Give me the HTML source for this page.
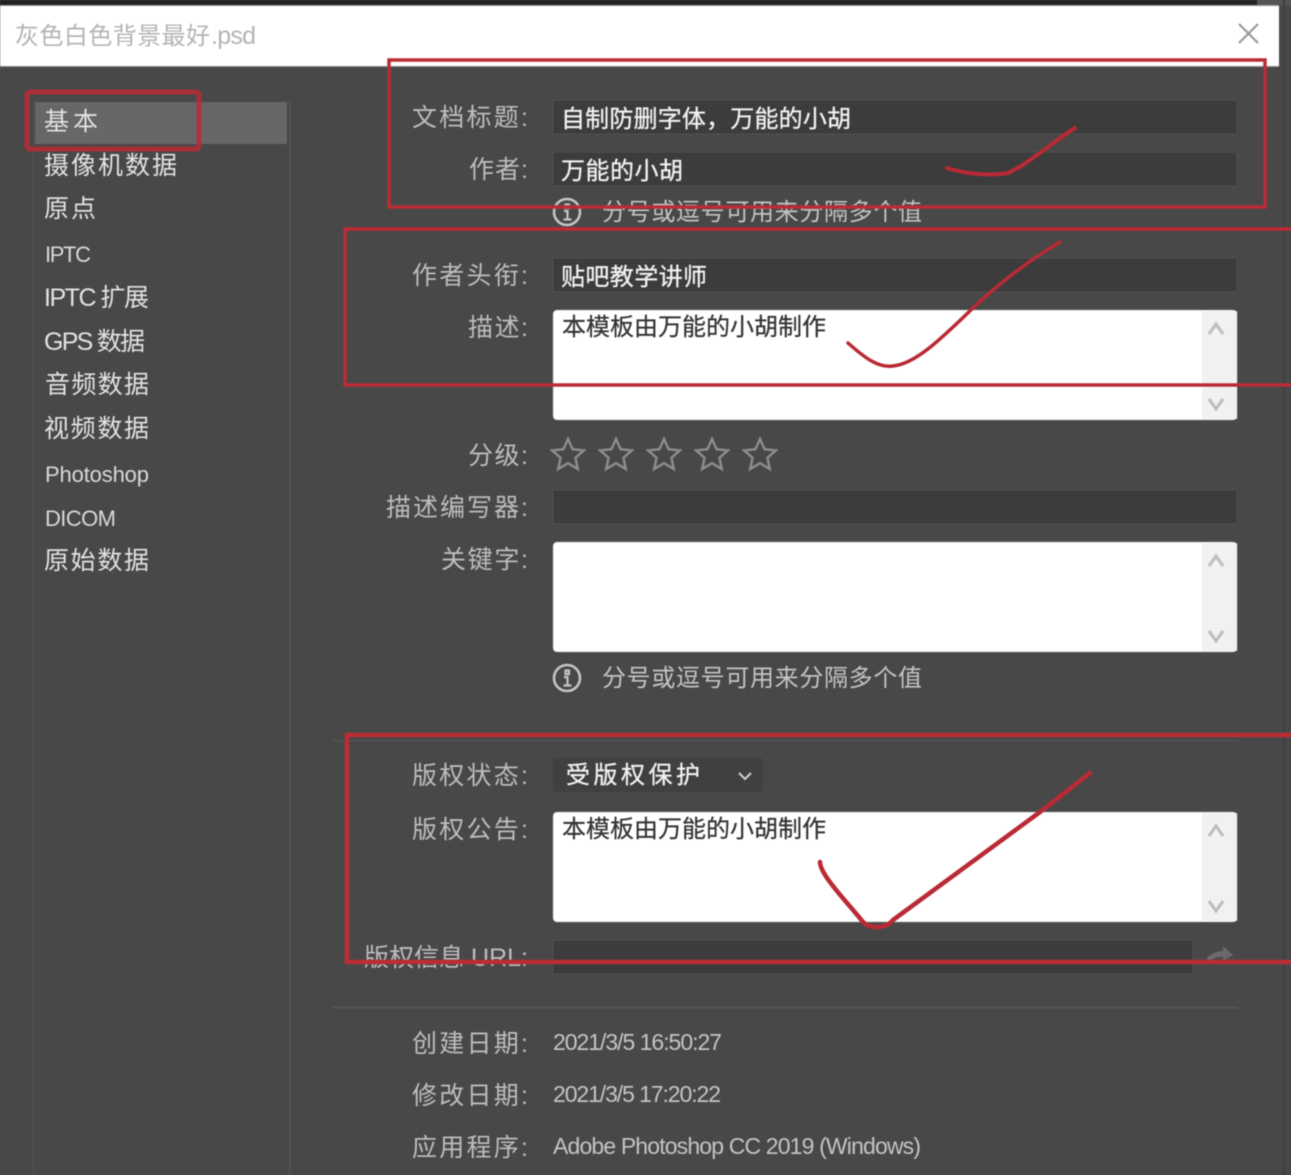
<!DOCTYPE html>
<html>
<head>
<meta charset="utf-8">
<style>
html,body{margin:0;padding:0;background:#484848;width:1291px;height:1175px;overflow:hidden}
svg{display:block;position:absolute;left:0;top:0;filter:blur(.45px)}
text{font-family:"Liberation Sans","Noto Sans CJK SC",sans-serif}
.l{fill:#bdbdbd;font-size:25px}
.s{fill:#e2e2e2;font-size:25px}
.se{fill:#d8d8d8;font-size:22px}
.v{fill:#f2f2f2;font-size:24px;stroke:#f2f2f2;stroke-width:.3px}
.b{fill:#333;font-size:24px;stroke:#333;stroke-width:.25px}
.h{fill:#c4c4c4;font-size:24px}
.m{fill:#c4c4c4;font-size:23px}
.f{fill:#3c3c3c;stroke:#505050;stroke-width:1}
.w{fill:#fff;stroke:#999;stroke-width:.6}
.sb{fill:#f1f1f1}
.ar{fill:none;stroke:#bdbdbd;stroke-width:3}
.st{fill:none;stroke:#8d8d8d;stroke-width:2.4}
.r{fill:none;stroke:#bb2c35}
.c{fill:none;stroke:#b92a35;stroke-linecap:round;stroke-linejoin:round}
</style>
</head>
<body>
<svg width="1291" height="1175" viewBox="0 0 1291 1175" xmlns="http://www.w3.org/2000/svg">
<defs>
<path id="star" d="M0-15 4.6-4.8 15.8-3.6 7.4 3.8 9.8 15 0 9.2-9.8 15-7.4 3.8-15.8-3.6-4.6-4.8Z"/>
</defs>
<rect width="1291" height="1175" fill="#484848"/>
<rect width="1291" height="5" fill="#232323"/>
<rect x="1257" width="34" height="5" fill="#555"/>
<rect x="0" y="5" width="1279" height="1" fill="#9a9a9a"/>
<rect x="0" y="6" width="1279" height="60" fill="#fff"/>
<rect x="0" y="66" width="1279" height="1" fill="#8c8c8c"/>
<rect x="1283" y="0" width="2" height="1175" fill="#3f3f3f"/>
<text x="15" y="44" font-size="24" fill="#b4b4b4" textLength="195" lengthAdjust="spacing">灰色白色背景最好</text>
<text x="211" y="44" font-size="25" fill="#b4b4b4" textLength="45" lengthAdjust="spacing">.psd</text>
<path d="M1239 24 1258 43M1258 24 1239 43" stroke="#9a9a9a" stroke-width="2.2" fill="none"/>

<!-- sidebar -->
<rect x="33" y="101" width="1" height="1074" fill="#555"/>
<rect x="289" y="101" width="1.5" height="1074" fill="#555"/>
<rect x="35" y="102" width="252" height="42" fill="#676767"/>
<g>
<text class="s" x="44" y="130" textLength="54" lengthAdjust="spacing">基本</text>
<text class="s" x="44" y="174" textLength="133" lengthAdjust="spacing">摄像机数据</text>
<text class="s" x="44" y="217" textLength="52" lengthAdjust="spacing">原点</text>
<text class="se" x="45" y="262" textLength="46" lengthAdjust="spacing">IPTC</text>
<text class="s" x="44" y="306" textLength="105" lengthAdjust="spacing">IPTC 扩展</text>
<text class="s" x="44" y="350" textLength="101" lengthAdjust="spacing">GPS 数据</text>
<text class="s" x="45" y="393" textLength="104" lengthAdjust="spacing">音频数据</text>
<text class="s" x="44" y="437" textLength="105" lengthAdjust="spacing">视频数据</text>
<text class="se" x="45" y="482" textLength="104" lengthAdjust="spacing">Photoshop</text>
<text class="se" x="45" y="526" textLength="71" lengthAdjust="spacing">DICOM</text>
<text class="s" x="44" y="569" textLength="105" lengthAdjust="spacing">原始数据</text>
</g>

<!-- labels -->
<g>
<text class="l" x="412" y="126" textLength="116" lengthAdjust="spacing">文档标题:</text>
<text class="l" x="469" y="178" textLength="59" lengthAdjust="spacing">作者:</text>
<text class="l" x="412" y="284" textLength="116" lengthAdjust="spacing">作者头衔:</text>
<text class="l" x="468" y="336" textLength="60" lengthAdjust="spacing">描述:</text>
<text class="l" x="468" y="464" textLength="60" lengthAdjust="spacing">分级:</text>
<text class="l" x="386" y="516" textLength="142" lengthAdjust="spacing">描述编写器:</text>
<text class="l" x="441" y="568" textLength="87" lengthAdjust="spacing">关键字:</text>
<text class="l" x="412" y="784" textLength="116" lengthAdjust="spacing">版权状态:</text>
<text class="l" x="412" y="838" textLength="116" lengthAdjust="spacing">版权公告:</text>
<text class="l" x="364" y="966" textLength="164" lengthAdjust="spacing">版权信息 URL:</text>
<text class="l" x="412" y="1052" textLength="116" lengthAdjust="spacing">创建日期:</text>
<text class="l" x="412" y="1104" textLength="116" lengthAdjust="spacing">修改日期:</text>
<text class="l" x="412" y="1156" textLength="116" lengthAdjust="spacing">应用程序:</text>
</g>

<!-- fields -->
<rect class="f" x="553" y="100" width="684" height="34" rx="2"/>
<rect class="f" x="553" y="152" width="684" height="34" rx="2"/>
<rect class="f" x="553" y="258" width="684" height="34" rx="2"/>
<rect class="f" x="553" y="490" width="684" height="34" rx="2"/>
<rect x="553" y="758" width="210" height="34" rx="3" fill="#404040"/>
<rect class="f" x="553" y="940" width="640" height="34" rx="2"/>

<text class="v" x="561" y="127" textLength="290" lengthAdjust="spacing">自制防删字体，万能的小胡</text>
<text class="v" x="561" y="179" textLength="122" lengthAdjust="spacing">万能的小胡</text>
<text class="v" x="561" y="285" textLength="146" lengthAdjust="spacing">贴吧教学讲师</text>
<text class="v" x="566" y="783" textLength="134" lengthAdjust="spacing">受版权保护</text>
<path d="M739 773 745 779 751 773" fill="none" stroke="#d0d0d0" stroke-width="2"/>

<!-- text areas -->
<g>
<rect class="w" x="553" y="310" width="684" height="110" rx="4"/>
<rect class="sb" x="1202" y="311" width="35" height="108"/>
<path class="ar" d="M1209 334 1216 324 1223 334M1209 399 1216 409 1223 399"/>
<rect class="w" x="553" y="542" width="684" height="110" rx="4"/>
<rect class="sb" x="1202" y="543" width="35" height="108"/>
<path class="ar" d="M1209 566 1216 556 1223 566M1209 631 1216 641 1223 631"/>
<rect class="w" x="553" y="812" width="684" height="110" rx="4"/>
<rect class="sb" x="1202" y="813" width="35" height="108"/>
<path class="ar" d="M1209 836 1216 826 1223 836M1209 901 1216 911 1223 901"/>
</g>
<text class="b" x="562" y="335" textLength="264" lengthAdjust="spacing">本模板由万能的小胡制作</text>
<text class="b" x="562" y="837" textLength="264" lengthAdjust="spacing">本模板由万能的小胡制作</text>

<!-- info hints -->
<g fill="none" stroke="#c4c4c4" stroke-width="2.6">
<circle cx="567" cy="212" r="13"/>
<circle cx="567" cy="678" r="13"/>
</g>
<path d="M565.500 204.500h3.500v3.500h-3.500zM564 211h3.500v8M563.500 219.500h8M565.500 670.500h3.500v3.500h-3.500zM564 677h3.500v8M563.500 685.500h8" stroke="#c4c4c4" stroke-width="2.200" fill="none"/>
<text class="h" x="602" y="220" textLength="320" lengthAdjust="spacing">分号或逗号可用来分隔多个值</text>
<text class="h" x="602" y="686" textLength="320" lengthAdjust="spacing">分号或逗号可用来分隔多个值</text>

<!-- stars -->
<use href="#star" class="st" x="568" y="454"/>
<use href="#star" class="st" x="616" y="454"/>
<use href="#star" class="st" x="664" y="454"/>
<use href="#star" class="st" x="712" y="454"/>
<use href="#star" class="st" x="760" y="454"/>

<!-- dividers -->
<rect x="332" y="740" width="906" height="1.500" fill="#535353"/>
<rect x="332" y="1007" width="906" height="1.500" fill="#575757"/>

<!-- url arrow icon -->
<path d="M1207 958C1213 952 1219 951 1223 951V946L1233 955 1223 961V957C1217 957 1212 958 1207 964Z" fill="#6a6a6e"/>

<!-- dates -->
<text class="m" x="553" y="1050" textLength="169" lengthAdjust="spacing">2021/3/5 16:50:27</text>
<text class="m" x="553" y="1102" textLength="168" lengthAdjust="spacing">2021/3/5 17:20:22</text>
<text class="m" x="553" y="1154" textLength="368" lengthAdjust="spacing">Adobe Photoshop CC 2019 (Windows)</text>

<!-- red annotations -->
<rect class="r" style="stroke-width:5;opacity:.85" x="27" y="92" width="172" height="57" rx="3"/>
<path class="r" style="stroke-width:3.5" d="M389 60H1265V207H389Z"/>
<path class="r" style="stroke-width:3.5" d="M1291 229H345V385H1291"/>
<path class="r" style="stroke-width:4.5" d="M1291 735H347V962H1291"/>
<path class="c" style="stroke-width:4" d="M947 168C965 174 990 176 1008 173 1030 163 1052 142 1075 128"/>
<path class="c" style="stroke-width:3.5" d="M848 343C865 358 878 368 893 366 915 364 940 340 973 308 1000 282 1030 260 1060 242"/>
<path class="c" style="stroke-width:4.5" d="M820 862C820 875 848 903 863 922 870 929 886 929 893 920L1040 812 1090 773"/>
</svg>
</body>
</html>
